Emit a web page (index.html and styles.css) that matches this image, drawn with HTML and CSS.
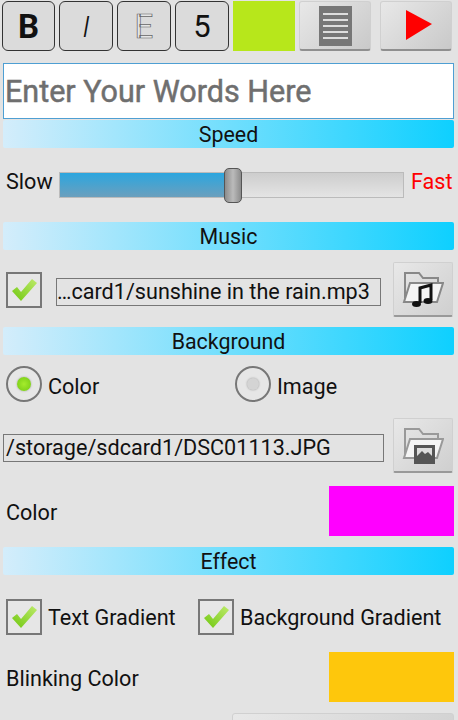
FILE: index.html
```html
<!DOCTYPE html>
<html lang="en">
<head>
    <meta charset="UTF-8">
    <title>Scrolling Text Settings</title>
    <link rel="stylesheet" href="styles.css">
</head>
<body>
<svg class="defs" width="0" height="0">
    <defs>
        <linearGradient id="tick" x1="1" y1="0" x2="0" y2="1">
            <stop offset="0" stop-color="#bdea6a"/>
            <stop offset="1" stop-color="#6fc70f"/>
        </linearGradient>
    </defs>
</svg>
<div class="screen">
    <div class="toolbar">
        <button class="tool tool-bold">B</button>
        <button class="tool tool-italic">I</button>
        <button class="tool tool-outline">E</button>
        <button class="tool">5</button>
        <div class="swatch-lime"></div>
        <button class="action action-list">
            <svg width="33" height="40" viewBox="0 0 33 40">
                <rect width="33" height="40" fill="#777"/>
                <g stroke="#ddd" stroke-width="2">
                    <line x1="4" y1="8" x2="29" y2="8"/>
                    <line x1="4" y1="14" x2="29" y2="14"/>
                    <line x1="4" y1="20" x2="29" y2="20"/>
                    <line x1="4" y1="26" x2="29" y2="26"/>
                    <line x1="4" y1="32" x2="29" y2="32"/>
                </g>
            </svg>
        </button>
        <button class="action action-play">
            <svg width="27" height="31" viewBox="0 0 27 31"><path d="M1 0L27 14L1 30Z" fill="#f00"/></svg>
        </button>
    </div>

    <div class="words-input">Enter Your Words Here</div>

    <h2 class="section">Speed</h2>
    <div class="speed-row">
        <span class="label">Slow</span>
        <div class="slider">
            <div class="slider-fill"></div>
            <div class="slider-thumb"></div>
        </div>
        <span class="label fast">Fast</span>
    </div>

    <h2 class="section">Music</h2>
    <div class="file-row music-row">
        <span class="check">
            <svg width="26" height="24" viewBox="0 0 26 24"><path d="M1 13L6 9L10 14L21 1L26 5L10 23Z" fill="url(#tick)"/></svg>
        </span>
        <div class="path-field music-field">…card1/sunshine in the rain.mp3</div>
        <button class="folder">
            <svg width="42" height="38" viewBox="0 0 42 38">
                <path d="M3 28V3H17L21 8H36V13" fill="none" stroke="#888" stroke-width="2"/>
                <path d="M8 13H41L35 32H2Z" fill="#f4f4f4" stroke="#888" stroke-width="2"/>
                <path d="M18 33V18L29 15V30" fill="none" stroke="#111" stroke-width="3"/>
                <ellipse cx="14.500" cy="34" rx="4.500" ry="3" fill="#111"/>
                <ellipse cx="26" cy="31" rx="4.500" ry="3" fill="#111"/>
            </svg>
        </button>
    </div>

    <h2 class="section section-gap">Background</h2>
    <div class="radio-row">
        <label class="option option-color"><span class="radio on"></span>Color</label>
        <label class="option"><span class="radio"></span>Image</label>
    </div>
    <div class="file-row image-row">
        <div class="path-field image-field">/storage/sdcard1/DSC01113.JPG</div>
        <button class="folder">
            <svg width="42" height="38" viewBox="0 0 42 38">
                <path d="M3 28V3H17L21 8H36V13" fill="none" stroke="#999" stroke-width="2"/>
                <path d="M8 13H41L35 32H2Z" fill="#f4f4f4" stroke="#999" stroke-width="2"/>
                <rect x="12" y="19" width="21" height="19" fill="#555"/>
                <rect x="15" y="22" width="15" height="8" fill="#ddd"/>
                <path d="M15 30L20 25L23 28L26 26L30 30Z" fill="#555"/>
            </svg>
        </button>
    </div>
    <div class="color-row color-row-bg">
        <span class="label">Color</span>
        <div class="swatch swatch-magenta"></div>
    </div>

    <h2 class="section">Effect</h2>
    <div class="effect-row">
        <label class="option option-text">
            <span class="check">
                <svg width="26" height="24" viewBox="0 0 26 24"><path d="M1 13L6 9L10 14L21 1L26 5L10 23Z" fill="url(#tick)"/></svg>
            </span>Text Gradient
        </label>
        <label class="option">
            <span class="check">
                <svg width="26" height="24" viewBox="0 0 26 24"><path d="M1 13L6 9L10 14L21 1L26 5L10 23Z" fill="url(#tick)"/></svg>
            </span>Background Gradient
        </label>
    </div>
    <div class="color-row color-row-blink">
        <span class="label">Blinking Color</span>
        <div class="swatch swatch-amber"></div>
    </div>
    <button class="bottom-button"></button>
</div>
</body>
</html>
```

FILE: styles.css
```css
* {
    box-sizing: border-box;
    margin: 0;
    padding: 0;
}

html, body {
    height: 720px;
    overflow: hidden;
}

body {
    font-family: Roboto, "Liberation Sans", sans-serif;
    background-color: #e3e3e3;
    color: #111;
}

.defs {
    display: block;
}

.screen {
    width: 458px;
    height: 720px;
    overflow: hidden;
}

button {
    font-family: inherit;
    color: inherit;
}

/* top toolbar */
.toolbar {
    display: flex;
    height: 51px;
    padding: 1px 0 0 2px;
}

.tool {
    width: 54px;
    height: 50px;
    margin-right: 4px;
    border: 1px solid #333;
    border-radius: 6px;
    background-color: #dbdbdb;
    font-size: 31px;
}

.tool-bold {
    width: 53px;
    font-weight: bold;
    font-size: 33px;
}

.tool-italic {
    font-style: italic;
    font-weight: 300;
    font-size: 30px;
}

.tool-outline {
    color: #e6e6e6;
    -webkit-text-stroke: 0.7px #666;
    font-size: 33px;
}

.swatch-lime {
    width: 62px;
    height: 50px;
    background-color: #b7e71b;
}

.action {
    display: flex;
    align-items: center;
    justify-content: center;
    width: 72px;
    height: 50px;
    margin-left: 4px;
    border: 1px solid #d0d0d0;
    border-bottom: 2px solid #8f8f8f;
    border-radius: 3px;
    background: linear-gradient(135deg, #e8e8e8, #c9c9c9);
}

.action-play {
    margin-left: 9px;
    padding-left: 4px;
}

/* text input */
.words-input {
    height: 56px;
    margin: 12px 4px 1px 3px;
    padding: 0 0 0 1px;
    border: 1px solid #4e9fd3;
    background-color: #fff;
    color: #6f6f6f;
    font-size: 30.5px;
    -webkit-text-stroke: 0.5px #6f6f6f;
    line-height: 56px;
    white-space: nowrap;
}

/* section headings */
.section {
    height: 28px;
    margin: 0 4px 0 3px;
    border-radius: 2px;
    background: linear-gradient(90deg, #d4edfb, #0ed0ff);
    font-size: 21.4px;
    font-weight: normal;
    line-height: 30px;
    text-align: center;
}

.section-gap {
    margin-top: 10px;
}

.label {
    font-size: 21.6px;
}

/* speed */
.speed-row {
    display: flex;
    align-items: center;
    height: 74px;
    padding-left: 6px;
}

.speed-row .label {
    flex: none;
    width: 53px;
    padding-bottom: 8px;
}

.slider {
    position: relative;
    flex: none;
    width: 345px;
    height: 26px;
    border: 1px solid #bbb;
    background: linear-gradient(#cdcdcd, #e4e4e4);
}

.slider-fill {
    width: 165px;
    height: 100%;
    background: linear-gradient(#2ba6df, #6b9fbd);
}

.slider-thumb {
    position: absolute;
    top: -5px;
    left: 164px;
    width: 18px;
    height: 35px;
    border: 1px solid #555;
    border-radius: 5px;
    background: linear-gradient(90deg, #8c8c8c, #bbb 50%, #8c8c8c);
}

.speed-row .fast {
    width: auto;
    margin-left: 7px;
    color: #f00;
}

/* file rows */
.file-row {
    display: flex;
    align-items: center;
}

.music-row {
    height: 55px;
    margin-top: 12px;
    padding-left: 6px;
}

.image-row {
    height: 55px;
    margin-top: 16px;
    padding-left: 3px;
}

.check {
    display: inline-flex;
    flex: none;
    align-items: center;
    justify-content: center;
    width: 36px;
    height: 36px;
    border: 2px solid #777;
    background-color: #e6e6e6;
}

.path-field {
    flex: none;
    height: 28px;
    border: 1px solid #777;
    font-size: 21.6px;
    line-height: 26px;
    white-space: nowrap;
    overflow: hidden;
}

.music-field {
    width: 325px;
    margin: 5px 12px 0 14px;
}

.image-field {
    width: 381px;
    margin: 5px 9px 0 0;
    padding-left: 2px;
}

.folder {
    display: flex;
    flex: none;
    align-items: center;
    justify-content: center;
    width: 60px;
    height: 55px;
    border: 1px solid #d0d0d0;
    border-bottom: 2px solid #999;
    border-radius: 2px;
    background: linear-gradient(135deg, #e8e8e8, #cfcfcf);
}

/* radios and checkboxes */
.option {
    display: flex;
    align-items: center;
    font-size: 21.6px;
}

.radio-row {
    display: flex;
    height: 36px;
    margin-top: 11px;
    padding-left: 6px;
}

.radio-row .option {
    align-items: flex-start;
    line-height: 41px;
}

.option-color {
    width: 229px;
}

.radio {
    position: relative;
    width: 36px;
    height: 36px;
    margin-right: 6px;
    border: 2px solid #777;
    border-radius: 50%;
    background-color: #e6e6e6;
}

.radio::after {
    content: "";
    position: absolute;
    top: 10px;
    left: 10px;
    width: 12px;
    height: 12px;
    border-radius: 50%;
    background-color: #d4d4d4;
    box-shadow: 0 0 2px #999;
}

.radio.on::after {
    top: 9px;
    left: 9px;
    width: 14px;
    height: 14px;
    background: radial-gradient(#a5ec2c, #72c814);
}

.effect-row {
    display: flex;
    height: 36px;
    margin-top: 24px;
    padding-left: 6px;
}

.effect-row .check {
    margin-right: 6px;
}

.option-text {
    width: 192px;
}

/* colour rows */
.color-row {
    display: flex;
    align-items: center;
    justify-content: space-between;
    height: 50px;
    padding: 0 4px 0 6px;
}

.color-row .label {
    padding-top: 2px;
}

.color-row-bg {
    margin: 13px 0 11px;
}

.color-row-blink {
    margin-top: 17px;
}

.swatch {
    width: 125px;
    height: 50px;
}

.swatch-magenta {
    background-color: #f0f;
}

.swatch-amber {
    background-color: #fec70c;
}

.bottom-button {
    display: block;
    width: 222px;
    height: 50px;
    margin: 11px 0 0 232px;
    border: 1px solid #d0d0d0;
    border-radius: 3px;
    background: linear-gradient(135deg, #e8e8e8, #cfcfcf);
}
```
